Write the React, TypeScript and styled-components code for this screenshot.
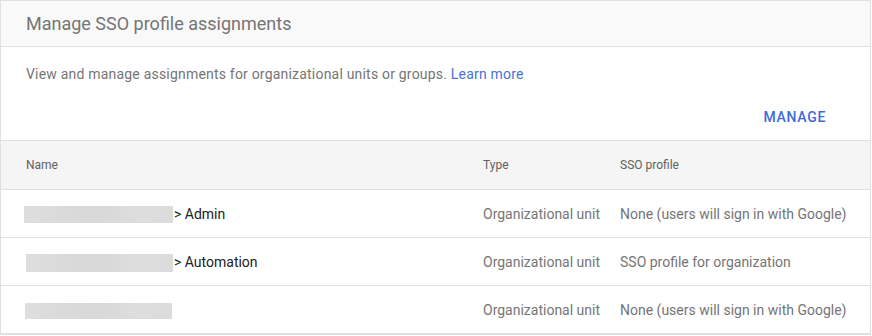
import React from "react";
import styled, { createGlobalStyle } from "styled-components";

const Global = createGlobalStyle`
  html, body { margin: 0; padding: 0; background: #ffffff; }
  body { font-family: Roboto, "Liberation Sans", Arial, sans-serif; -webkit-font-smoothing: antialiased; }
  * { box-sizing: border-box; }
`;

const Card = styled.div`
  width: 871px;
  height: 335px;
  border: 1px solid #e0e0e0;
  background: #ffffff;
  display: flex;
  flex-direction: column;
  overflow: hidden;
`;

const Header = styled.div`
  height: 47px;
  background: #f9f9f9;
  border-bottom: 1px solid #e0e0e0;
  display: flex;
  align-items: center;
  padding-left: 25px;
`;

const Title = styled.h2`
  margin: 0;
  font-size: 18px;
  font-weight: 400;
  color: #757575;
`;

const Intro = styled.div`
  padding: 17px 36px 5px 25px;
  display: flex;
  flex-direction: column;
`;

const Description = styled.p`
  margin: 0;
  font-size: 14px;
  line-height: 20px;
  letter-spacing: 0.2px;
  color: #757575;
`;

const Link = styled.a`
  color: #4a72d9;
  text-decoration: none;
`;

const Actions = styled.div`
  margin-top: 15px;
  display: flex;
  justify-content: flex-end;
`;

const TextButton = styled.button`
  height: 36px;
  padding: 0 8px;
  border: none;
  background: transparent;
  font-family: inherit;
  font-size: 14px;
  font-weight: 500;
  letter-spacing: 0.7px;
  text-transform: uppercase;
  color: #3f6bd8;
  cursor: pointer;
`;

const Table = styled.div`
  display: flex;
  flex-direction: column;
  border-top: 1px solid #e0e0e0;
`;

const Row = styled.div<{ $head?: boolean }>`
  display: grid;
  grid-template-columns: 457px 137px 1fr;
  align-items: center;
  height: ${(p) => (p.$head ? "49px" : "48px")};
  padding-left: 25px;
  border-bottom: 1px solid #e0e0e0;
  background: ${(p) => (p.$head ? "#f5f5f5" : "#ffffff")};
  font-size: ${(p) => (p.$head ? "12px" : "14px")};
  color: ${(p) => (p.$head ? "#616161" : "#757575")};
  white-space: nowrap;
`;

const NameCell = styled.div`
  display: flex;
  align-items: center;
  color: #212121;
`;

const Redacted = styled.span<{ $w: number; $h: number; $off: number }>`
  display: inline-block;
  width: ${(p) => p.$w}px;
  height: ${(p) => p.$h}px;
  margin-left: ${(p) => p.$off}px;
  margin-right: 1px;
  margin-top: 2px;
  background: linear-gradient(90deg, #dedede 0%, #dadada 25%, #d8d8d8 50%, #dddddd 75%, #dcdcdc 100%);
`;

const Cell = styled.div``;

const rows = [
  { w: 149, h: 17, off: -2, label: "> Admin", profile: "None (users will sign in with Google)" },
  { w: 147, h: 18, off: 0, label: "> Automation", profile: "SSO profile for organization" },
  { w: 147, h: 16, off: -1, label: "", profile: "None (users will sign in with Google)" },
];

export default function App() {
  return (
    <>
      <Global />
      <Card>
        <Header>
          <Title>Manage SSO profile assignments</Title>
        </Header>
        <Intro>
          <Description>
            View and manage assignments for organizational units or groups. <Link href="#">Learn more</Link>
          </Description>
          <Actions>
            <TextButton>Manage</TextButton>
          </Actions>
        </Intro>
        <Table>
          <Row $head>
            <Cell>Name</Cell>
            <Cell>Type</Cell>
            <Cell>SSO profile</Cell>
          </Row>
          {rows.map((r, i) => (
            <Row key={i}>
              <NameCell>
                <Redacted $w={r.w} $h={r.h} $off={r.off} />
                {r.label && <span>{r.label}</span>}
              </NameCell>
              <Cell>Organizational unit</Cell>
              <Cell>{r.profile}</Cell>
            </Row>
          ))}
        </Table>
      </Card>
    </>
  );
}
